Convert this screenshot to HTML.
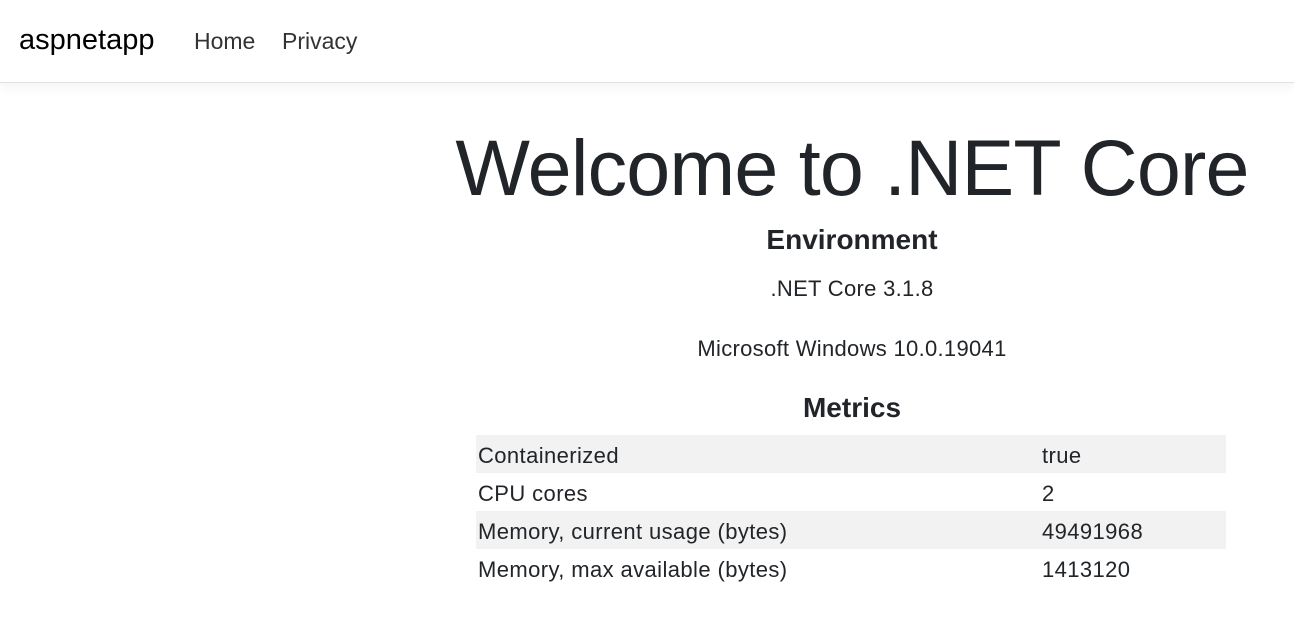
<!DOCTYPE html>
<html><head><style>
body{margin:0;background:#fff;font-family:"Liberation Sans",sans-serif;color:#212529;width:1294px;height:621px;overflow:hidden;position:relative}
.nav{position:absolute;left:0;top:0;width:1294px;height:82px;border-bottom:1px solid #dee2e6;box-shadow:0 4px 12px rgba(0,0,0,.05)}
.brand{position:absolute;left:19px;top:24px;font-size:29px;color:#000}
.l{position:absolute;top:28px;font-size:23px;color:#333}
.c{position:absolute;left:452px;width:800px;text-align:center}
h1{position:absolute;left:440px;width:824px;top:122px;margin:0;font-weight:normal;font-size:79px;text-align:center;letter-spacing:-0.8px;color:#212529}
h4{margin:0;font-size:28px;font-weight:bold}
p{margin:0;font-size:22px;letter-spacing:.3px}
table{position:absolute;left:476px;top:435px;width:750px;border-collapse:collapse;font-size:22px;letter-spacing:.4px}
td{height:38px;padding:3px 0 0 2px;box-sizing:border-box}
tr:nth-child(odd){background:#f2f2f2}
</style></head><body>
<div class="nav"><div class="brand">aspnetapp</div><div class="l" style="left:194px">Home</div><div class="l" style="left:282px">Privacy</div></div>
<h1>Welcome to .NET Core</h1>
<div class="c" style="top:224px"><h4>Environment</h4></div>
<div class="c" style="top:276px"><p>.NET Core 3.1.8</p></div>
<div class="c" style="top:336px"><p>Microsoft Windows 10.0.19041</p></div>
<div class="c" style="top:392px"><h4>Metrics</h4></div>
<table>
<tr><td style="width:566px">Containerized</td><td style="padding-left:0">true</td></tr>
<tr><td>CPU cores</td><td style="padding-left:0">2</td></tr>
<tr><td>Memory, current usage (bytes)</td><td style="padding-left:0">49491968</td></tr>
<tr><td>Memory, max available (bytes)</td><td style="padding-left:0">1413120</td></tr>
</table>
</body></html>
